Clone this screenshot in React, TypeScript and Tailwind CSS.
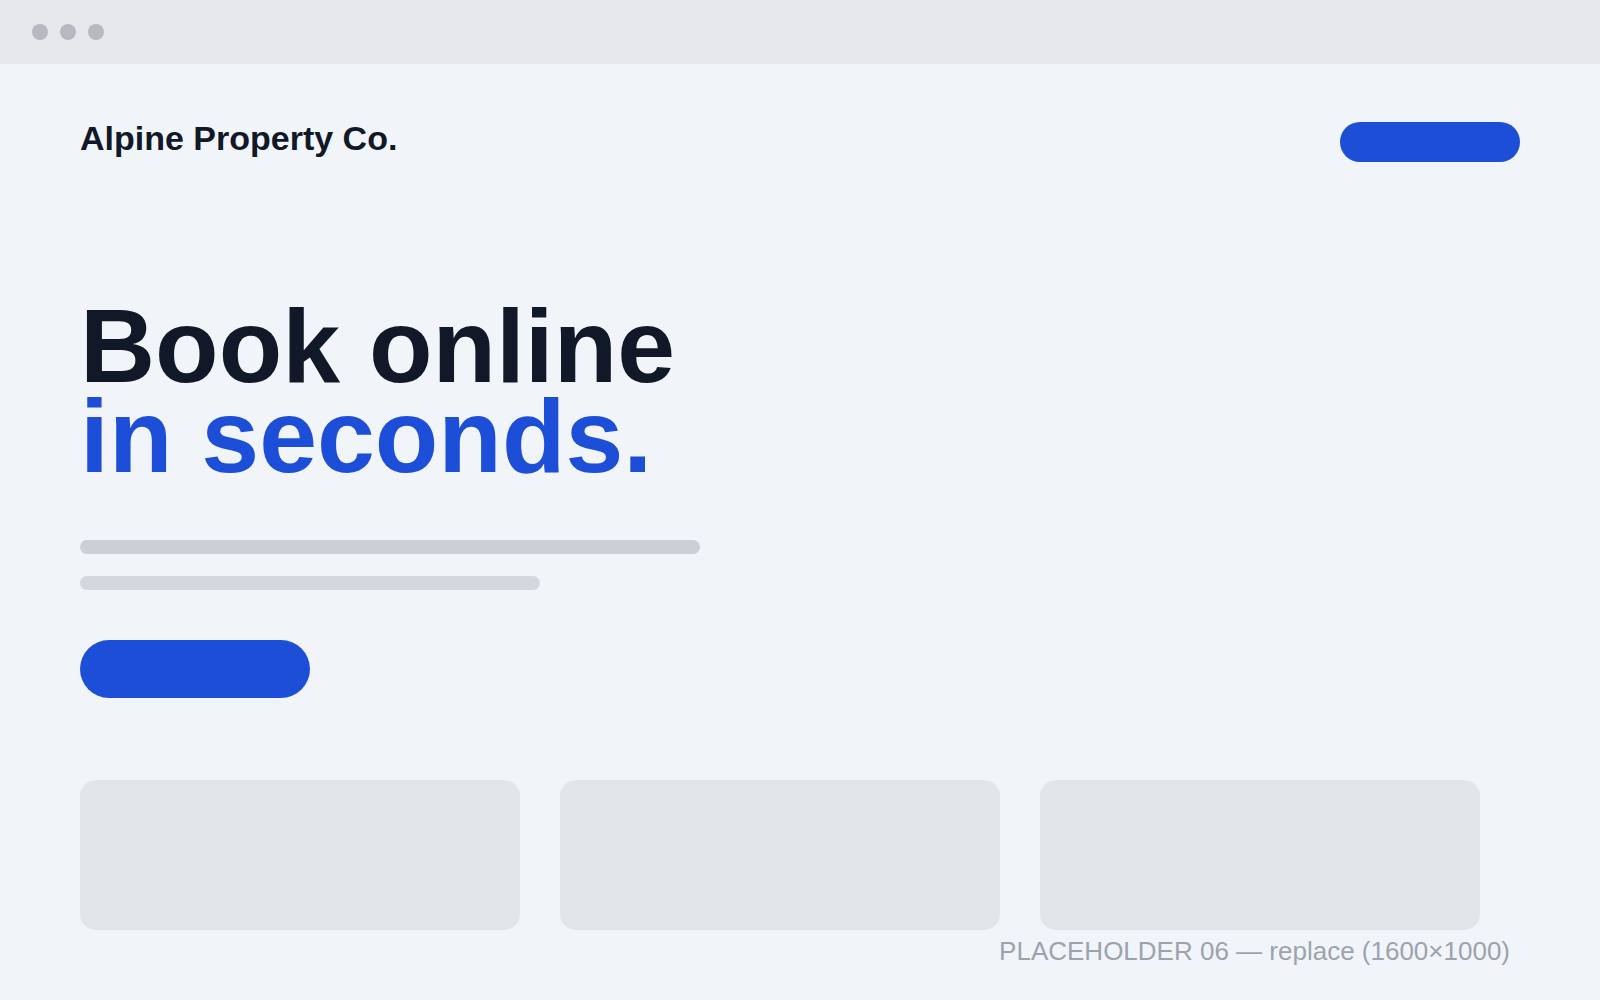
export default function App() {
  return (
    <div className="relative w-[1600px] h-[1000px] overflow-hidden bg-[#f1f5f9] font-['Liberation_Sans',Arial,sans-serif]">
      {/* window chrome */}
      <div className="h-16 bg-[#e5e7eb] flex items-center gap-3 pl-8">
        <span className="w-4 h-4 rounded-full bg-[#b6bac0]" />
        <span className="w-4 h-4 rounded-full bg-[#b6bac0]" />
        <span className="w-4 h-4 rounded-full bg-[#b6bac0]" />
      </div>

      <div className="px-20">
        {/* header */}
        <div className="flex items-start justify-between pt-[54px]">
          <div className="text-[34px] leading-[40px] font-bold text-[#111827]">Alpine Property Co.</div>
          <button className="mt-1 w-[180px] h-10 rounded-full bg-[#1d4ed8]" />
        </div>

        {/* hero */}
        <h1 className="mt-[139px] text-[104px] leading-[90px] font-bold">
          <span className="block text-[#111827]">Book online</span>
          <span className="block text-[#1d4ed8]">in seconds.</span>
        </h1>

        <div className="mt-[59px] w-[620px] h-[14px] rounded-full bg-[#cbd0d7]" />
        <div className="mt-[22px] w-[460px] h-[14px] rounded-full bg-[#d4d8de]" />

        <button className="mt-[50px] block w-[230px] h-[58px] rounded-full bg-[#1d4ed8]" />

        <div className="mt-[82px] grid grid-cols-3 gap-10 w-[1400px]">
          <div className="h-[150px] rounded-2xl bg-[#e2e6eb]" />
          <div className="h-[150px] rounded-2xl bg-[#e2e6eb]" />
          <div className="h-[150px] rounded-2xl bg-[#e2e6eb]" />
        </div>
      </div>

      <div className="absolute right-[90px] bottom-[29px] text-[26px] text-[#9ca3af]">
        PLACEHOLDER 06 — replace (1600×1000)
      </div>
    </div>
  )
}
